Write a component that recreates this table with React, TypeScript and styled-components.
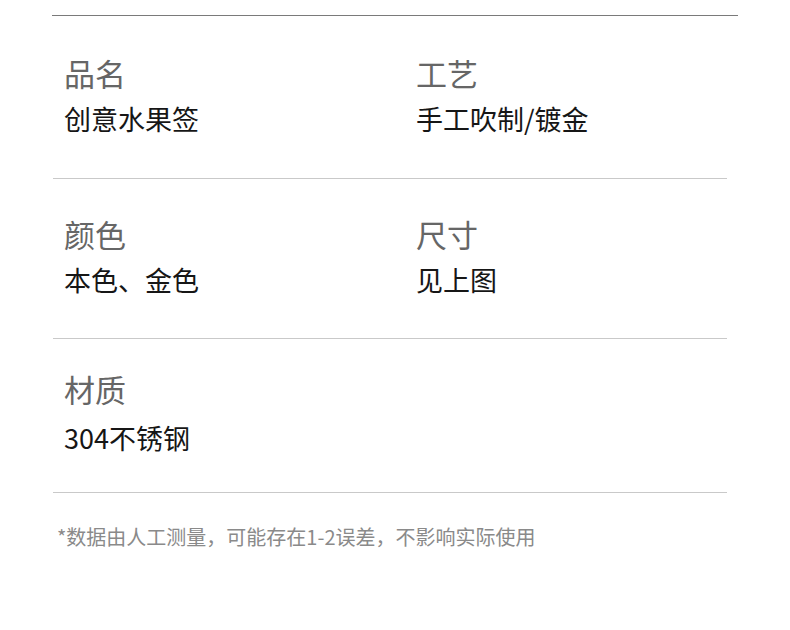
import React from 'react'
import styled, { createGlobalStyle } from 'styled-components'

const GlobalStyle = createGlobalStyle`
  html, body {
    margin: 0;
    padding: 0;
    background: #fff;
    font-family: "Noto Sans CJK SC", "Noto Sans", sans-serif;
  }
`

const Page = styled.div`
  width: 790px;
  height: 630px;
  padding-top: 15px;
  box-sizing: border-box;
`

const TopRule = styled.div`
  margin: 0 52px;
  height: 1px;
  background: #7a7a7a;
`

const Table = styled.div`
  margin: 0 63px 0 53px;
`

const Row = styled.div<{ $pad: number; $height: number; $gap: number }>`
  display: grid;
  grid-template-columns: 352px 1fr;
  height: ${p => p.$height}px;
  box-sizing: border-box;
  padding: ${p => p.$pad}px 0 0 11px;
  border-bottom: 1px solid #c9c9c9;
  --gap: ${p => p.$gap}px;
`

const Cell = styled.div`
  display: flex;
  flex-direction: column;
  gap: var(--gap);
`

const Label = styled.div`
  font-size: 31px;
  line-height: 30px;
  color: #666;
`

const Value = styled.div`
  font-size: 27px;
  line-height: 26px;
  color: #161616;
`

const Note = styled.div`
  margin: 34px 0 0 57px;
  font-size: 20px;
  line-height: 20px;
  color: #8a8a8a;
`

const rows = [
  { pad: 42, height: 163, gap: 18, cells: [['品名', '创意水果签'], ['工艺', '手工吹制/镀金']] },
  { pad: 40, height: 160, gap: 18, cells: [['颜色', '本色、金色'], ['尺寸', '见上图']] },
  { pad: 35, height: 154, gap: 21, cells: [['材质', '304不锈钢']] },
]

export default function App() {
  return (
    <>
      <GlobalStyle />
      <Page>
        <TopRule />
        <Table>
          {rows.map((r, i) => (
            <Row key={i} $pad={r.pad} $height={r.height} $gap={r.gap}>
              {r.cells.map(([l, v]) => (
                <Cell key={l}>
                  <Label>{l}</Label>
                  <Value>{v}</Value>
                </Cell>
              ))}
            </Row>
          ))}
        </Table>
        <Note>*数据由人工测量，可能存在1-2误差，不影响实际使用</Note>
      </Page>
    </>
  )
}
